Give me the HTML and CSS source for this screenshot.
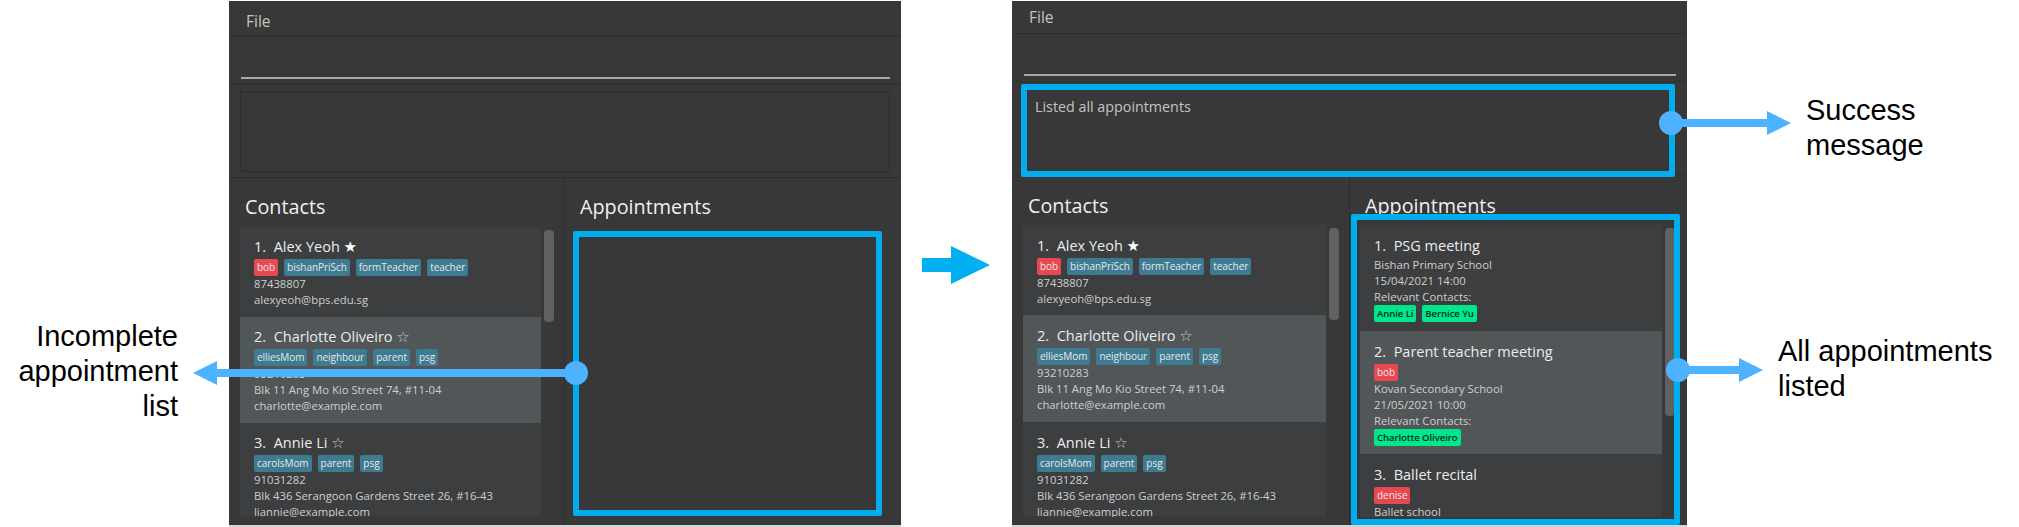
FILE: index.html
```html
<!DOCTYPE html>
<html lang="en">

<head>
  <meta charset="UTF-8">
  <meta name="viewport" content="width=device-width, initial-scale=1.0">
  <title>Appointments before and after</title>
  <link rel="stylesheet" href="styles.css">
</head>

<body>
  <main class="stage">
    <!-- before -->
    <section class="app app-before">
      <div class="menu-bar">File</div>
      <div class="command-box"><div class="command-line"></div></div>
      <div class="result-box"><div class="result-inner"></div></div>
      <div class="panes">
        <div class="pane pane-left">
          <h2 class="pane-title">Contacts</h2>
          <div class="list-wrap">
            <div class="list">
              <div class="card card-a">
                <div class="card-title">1.&nbsp; Alex Yeoh <span class="star">★</span></div>
                <div class="tags"><span class="tag tag-red">bob</span><span class="tag">bishanPriSch</span><span class="tag">formTeacher</span><span class="tag">teacher</span></div>
                <div class="line">87438807</div>
                <div class="line">alexyeoh@bps.edu.sg</div>
              </div>
              <div class="card card-b">
                <div class="card-title">2.&nbsp; Charlotte Oliveiro <span class="star star-off">☆</span></div>
                <div class="tags"><span class="tag">elliesMom</span><span class="tag">neighbour</span><span class="tag">parent</span><span class="tag">psg</span></div>
                <div class="line">93210283</div>
                <div class="line">Blk 11 Ang Mo Kio Street 74, #11-04</div>
                <div class="line">charlotte@example.com</div>
              </div>
              <div class="card card-c">
                <div class="card-title">3.&nbsp; Annie Li <span class="star star-off">☆</span></div>
                <div class="tags"><span class="tag">carolsMom</span><span class="tag">parent</span><span class="tag">psg</span></div>
                <div class="line">91031282</div>
                <div class="line">Blk 436 Serangoon Gardens Street 26, #16-43</div>
                <div class="line">liannie@example.com</div>
              </div>
            </div>
            <div class="scroll-track"><div class="scroll-thumb"></div></div>
          </div>
        </div>
        <div class="pane pane-right">
          <h2 class="pane-title">Appointments</h2>
        </div>
      </div>
    </section>

    <!-- after -->
    <section class="app app-after">
      <div class="menu-bar">File</div>
      <div class="command-box"><div class="command-line"></div></div>
      <div class="result-box"><div class="result-inner">Listed all appointments</div></div>
      <div class="panes">
        <div class="pane pane-left">
          <h2 class="pane-title">Contacts</h2>
          <div class="list-wrap">
            <div class="list">
              <div class="card card-a">
                <div class="card-title">1.&nbsp; Alex Yeoh <span class="star">★</span></div>
                <div class="tags"><span class="tag tag-red">bob</span><span class="tag">bishanPriSch</span><span class="tag">formTeacher</span><span class="tag">teacher</span></div>
                <div class="line">87438807</div>
                <div class="line">alexyeoh@bps.edu.sg</div>
              </div>
              <div class="card card-b">
                <div class="card-title">2.&nbsp; Charlotte Oliveiro <span class="star star-off">☆</span></div>
                <div class="tags"><span class="tag">elliesMom</span><span class="tag">neighbour</span><span class="tag">parent</span><span class="tag">psg</span></div>
                <div class="line">93210283</div>
                <div class="line">Blk 11 Ang Mo Kio Street 74, #11-04</div>
                <div class="line">charlotte@example.com</div>
              </div>
              <div class="card card-c">
                <div class="card-title">3.&nbsp; Annie Li <span class="star star-off">☆</span></div>
                <div class="tags"><span class="tag">carolsMom</span><span class="tag">parent</span><span class="tag">psg</span></div>
                <div class="line">91031282</div>
                <div class="line">Blk 436 Serangoon Gardens Street 26, #16-43</div>
                <div class="line">liannie@example.com</div>
              </div>
            </div>
            <div class="scroll-track"><div class="scroll-thumb"></div></div>
          </div>
        </div>
        <div class="pane pane-right">
          <h2 class="pane-title">Appointments</h2>
          <div class="list-wrap">
            <div class="list">
              <div class="card appt-a">
                <div class="card-title">1.&nbsp; PSG meeting</div>
                <div class="line">Bishan Primary School</div>
                <div class="line">15/04/2021 14:00</div>
                <div class="line">Relevant Contacts:</div>
                <div class="tags tags-flush"><span class="tag tag-green">Annie Li</span><span class="tag tag-green">Bernice Yu</span></div>
              </div>
              <div class="card card-b appt-b">
                <div class="card-title">2.&nbsp; Parent teacher meeting</div>
                <div class="tags"><span class="tag tag-red">bob</span></div>
                <div class="line">Kovan Secondary School</div>
                <div class="line">21/05/2021 10:00</div>
                <div class="line">Relevant Contacts:</div>
                <div class="tags tags-flush"><span class="tag tag-green">Charlotte Oliveiro</span></div>
              </div>
              <div class="card card-c">
                <div class="card-title">3.&nbsp; Ballet recital</div>
                <div class="tags"><span class="tag tag-red">denise</span></div>
                <div class="line">Ballet school</div>
              </div>
            </div>
            <div class="scroll-track"><div class="scroll-thumb"></div></div>
          </div>
        </div>
      </div>
    </section>

    <!-- annotations on top of the screenshots -->
    <div class="highlight hl-empty"></div>
    <div class="highlight hl-result"></div>
    <div class="highlight hl-appts"></div>

    <svg class="arrows" width="2019" height="527" viewBox="0 0 2019 527">
      <g fill="#4db2ff">
        <circle cx="576" cy="373" r="12"/>
        <path d="M576 369H217V361L193 373L217 385V377H576Z"/>
        <circle cx="1671" cy="123" r="12"/>
        <path d="M1671 119H1767V111L1791 123L1767 135V127H1671Z"/>
        <circle cx="1678" cy="370" r="12"/>
        <path d="M1678 366H1739V358L1763 370L1739 382V374H1678Z"/>
      </g>
      <path fill="#00b0f0" d="M922 258H951V246L990 265L951 284V272H922Z"/>
    </svg>

    <div class="note note-left">Incomplete<br>appointment<br>list</div>
    <div class="note note-success">Success<br>message</div>
    <div class="note note-all">All appointments<br>listed</div>
  </main>
</body>

</html>
```

FILE: styles.css
```css
* {
  box-sizing: border-box;
}

html,
body {
  margin: 0;
  background: #fff;
}

.stage {
  position: relative;
  width: 2019px;
  height: 527px;
  overflow: hidden;
  display: flex;
  align-items: flex-start;
  padding: 1px 0 0 229px;
  gap: 111px;
  font-family: "Open Sans", "Liberation Sans", sans-serif;
}

/* app window */
.app {
  display: flex;
  flex-direction: column;
  height: 526px;
  background: #383838;
  border-bottom: 2px solid #d4d4d4;
  color: #e0e0e0;
}

.app-before {
  width: 672px;
  --menu-h: 36px;
  --menu-pad: 4px;
  --title-pad: 15px;
  --title-h: 49px;
  --card-pad: 10px;
}

.app-after {
  width: 675px;
  --menu-h: 33px;
  --menu-pad: 0;
  --title-pad: 17px;
  --title-h: 50px;
  --card-pad: 11px;
}

.menu-bar {
  height: var(--menu-h);
  padding: var(--menu-pad) 0 0 17px;
  display: flex;
  align-items: center;
  font-size: 15.5px;
  color: #c4c4c4;
  border-bottom: 1px solid #2e2e2e;
}

.command-box {
  height: 48px;
  padding: 0 11px 5px 12px;
  display: flex;
  align-items: flex-end;
  border-bottom: 1px solid #2e2e2e;
}

.command-line {
  width: 100%;
  height: 2px;
  background: #a8a8a8;
}

.result-box {
  height: 93px;
  padding: 6px 11px 5px 11px;
  border-bottom: 1px solid #2e2e2e;
}

.result-inner {
  height: 100%;
  padding: 8px 11px;
  border: 1px solid #2e2e2e;
  font-size: 14.3px;
  color: #c4c4c4;
}

.app-after .result-inner {
  border-color: transparent;
}

.panes {
  flex: 1;
  min-height: 0;
  display: flex;
}

.pane {
  display: flex;
  flex-direction: column;
  min-width: 0;
}

.pane-left {
  width: 336px;
  padding: 0 10px 0 11px;
  border-right: 1px solid #2e2e2e;
}

.app-after .pane-left {
  width: 338px;
}

.pane-right {
  flex: 1;
  padding: 0 12px 0 10px;
}

.pane-title {
  margin: 0;
  height: var(--title-h);
  padding: var(--title-pad) 0 0 5px;
  font-size: 19.8px;
  font-weight: 400;
  line-height: 28px;
  color: #f0f0f0;
  flex-shrink: 0;
}

.list-wrap {
  flex: 1;
  min-height: 0;
  display: flex;
  gap: 3px;
  margin-bottom: 8px;
  overflow: hidden;
}

.list {
  flex: 1;
  min-width: 0;
  overflow: hidden;
  background: #3c3e3f;
}

.scroll-track {
  width: 10px;
  flex-shrink: 0;
  padding-top: 3px;
}

.scroll-thumb {
  height: 92px;
  background: #606060;
  border-radius: 4px;
}

.pane-right .scroll-thumb {
  height: 188px;
}

/* list cards */
.card {
  padding: var(--card-pad) 14px 0;
}

.card-a {
  height: 90px;
}

.card-b {
  height: 106px;
  background: #515658;
}

.app-after .card-b {
  height: 107px;
}

.app-after .appt-a {
  height: 106px;
}

.app-after .appt-b {
  height: 123px;
}

.card-title {
  font-size: 14.5px;
  line-height: 20px;
  font-weight: 500;
  color: #ececec;
}

.appt-a .card-title {
  margin-bottom: 1px;
}

.star {
  font-family: "DejaVu Sans", sans-serif;
  font-size: 15px;
  color: #fff;
}

.star-off {
  font-weight: 400;
  color: #c8c8c8;
}

.tags {
  display: flex;
  gap: 6px;
  margin-top: 2px;
}

.tags-flush {
  margin-top: 0;
}

.tag {
  height: 17px;
  padding: 0 3px;
  border-radius: 2px;
  background: #3e7b91;
  color: #e8e8e8;
  font-size: 10px;
  letter-spacing: -0.05px;
  line-height: 17px;
}

.tag-red {
  background: #e8484f;
}

.tag-green {
  background: #00e68a;
  color: #062b1c;
  font-size: 9.5px;
  font-weight: 600;
}

.line {
  font-size: 11.3px;
  line-height: 16px;
  color: #cfcfcf;
}

/* annotations */
.highlight {
  position: absolute;
  border: 6px solid #00aeef;
  border-radius: 2px;
}

.hl-empty {
  left: 573px;
  top: 231px;
  width: 309px;
  height: 285px;
}

.hl-result {
  left: 1021px;
  top: 84px;
  width: 654px;
  height: 93px;
}

.hl-appts {
  left: 1351px;
  top: 214px;
  width: 329px;
  height: 311px;
}

.arrows {
  position: absolute;
  left: 0;
  top: 0;
}

.note {
  position: absolute;
  font-family: "Liberation Sans", Arial, sans-serif;
  font-size: 29px;
  line-height: 35px;
  color: #000;
}

.note-left {
  right: 1841px;
  top: 319px;
  text-align: right;
}

.note-success {
  left: 1806px;
  top: 93px;
}

.note-all {
  left: 1778px;
  top: 334px;
}
```
